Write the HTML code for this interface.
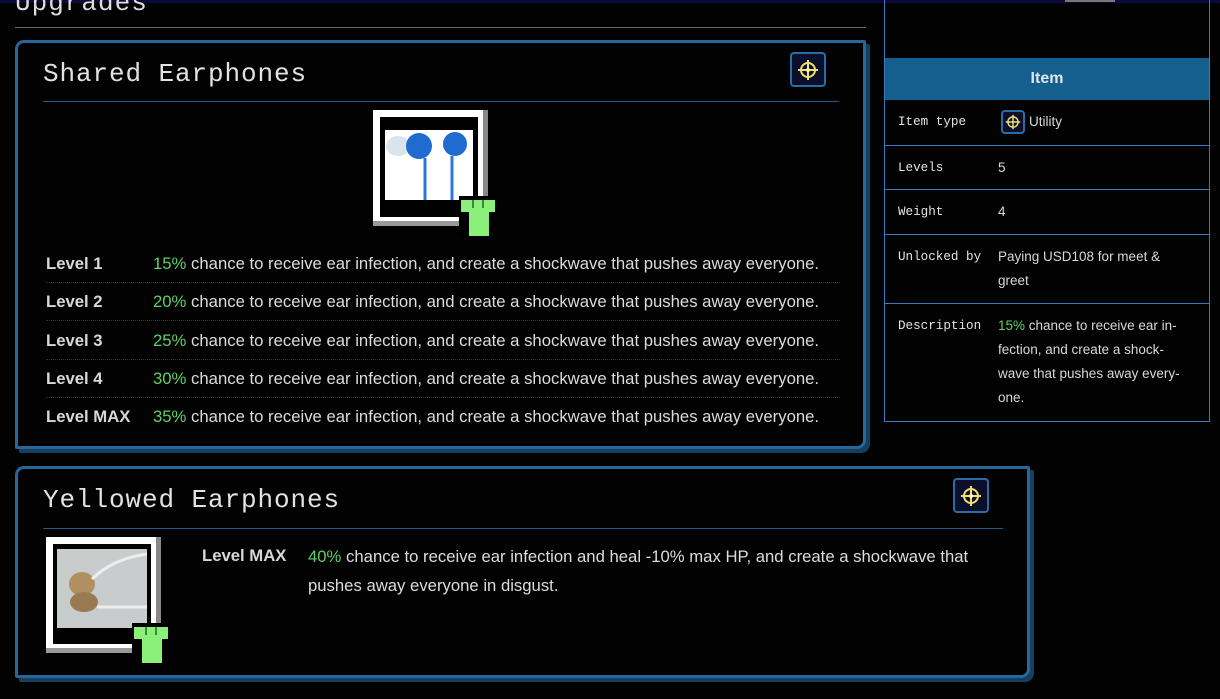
<!DOCTYPE html>
<html><head><meta charset="utf-8"><style>
*{margin:0;padding:0;box-sizing:border-box}
body{width:1220px;height:699px;background:#020202;position:relative;overflow:hidden;font-family:"Liberation Sans",sans-serif;color:#dcdcdc}
.topbar{position:absolute;left:0;top:0;width:1220px;height:3px;background:#0a0a3a}
.h2{position:absolute;left:15px;top:-12px;font-family:"Liberation Mono","DejaVu Sans Mono",monospace;font-size:26px;color:#ddd;letter-spacing:1px}
.hr{position:absolute;left:15px;top:27px;width:851px;height:1px;background:#666}
.box{position:absolute;border:3px solid #28679c;border-radius:9px 2px 9px 2px;box-shadow:4px 4px 0 #163e5e;background:#020202}
.title{position:absolute;font-family:"Liberation Mono","DejaVu Sans Mono",monospace;font-size:26px;color:#e2e2e2;letter-spacing:0.9px}
.line{position:absolute;height:1px;background:#1f5a88}
.ico{position:absolute;width:36px;height:35px;border:2px solid #2a6ca5;border-radius:4px;background:#0b0f2a}
.ico svg{position:absolute;left:5px;top:5px}
.row{position:absolute;left:28px;width:794px;height:38px;border-bottom:1px dotted #223344;font-size:16.7px}
.row b{position:absolute;left:0;top:9px;color:#d8d8d8}
.row span{position:absolute;left:107px;top:9px;white-space:nowrap}
.g{color:#5fd068}
.side{position:absolute;left:884px;top:0;width:326px;height:422px;border:1px solid #3a7ac0;border-top:none}
.shead{position:absolute;left:0;top:58px;width:324px;height:42px;background:#155f8e;color:#dfe6ee;font-weight:bold;font-size:16px;text-align:center;line-height:42px}
.srow{position:absolute;left:0;width:324px;border-top:1px solid #3a7ac0}
.sl{position:absolute;left:13px;font-family:"Liberation Mono","DejaVu Sans Mono",monospace;font-size:12.6px;color:#e4e4e4}
.sv{position:absolute;left:113px;width:178px;font-size:13.5px;line-height:24px;color:#d8d8d8}
</style></head><body>
<div class="topbar"></div>
<div class="h2">Upgrades</div>
<div class="hr"></div>

<div class="box" style="left:15px;top:40px;width:851px;height:409px">
 <div class="title" style="left:25px;top:16px">Shared Earphones</div>
 <div class="ico" style="left:772px;top:9px"><svg width="22" height="22" viewBox="0 0 22 22"><circle cx="11" cy="11" r="7" fill="none" stroke="#f0e070" stroke-width="2"/><path d="M11 1v20M1 11h20" stroke="#f0e070" stroke-width="2"/><circle cx="11" cy="11" r="2" fill="#fff2a0"/></svg></div>
 <div class="line" style="left:25px;top:58px;width:796px"></div>
 <div style="position:absolute;left:355px;top:67px;width:115px;height:116px;background:#fff"></div>
 <div style="position:absolute;left:465px;top:67px;width:5px;height:116px;background:#888"></div>
 <div style="position:absolute;left:355px;top:178px;width:115px;height:5px;background:#999"></div>
 <div style="position:absolute;left:362px;top:74px;width:98px;height:100px;background:#000"></div>
 <div style="position:absolute;left:367px;top:87px;width:88px;height:70px;background:#fff">
  <svg width="88" height="70"><ellipse cx="13" cy="16" rx="12" ry="10" fill="#d8e4ee"/><ellipse cx="34" cy="16" rx="13" ry="13" fill="#1f6bd0"/><ellipse cx="70" cy="14" rx="12" ry="12" fill="#1f6bd0"/><path d="M40 28v42M67 26v44" stroke="#2a78d0" stroke-width="3"/></svg>
 </div>
 <div style="position:absolute;left:441px;top:153px;width:37px;height:42px;background:#000"></div>
 <svg style="position:absolute;left:441px;top:155px" width="38" height="38" viewBox="0 0 38 38"><path d="M2 2h34v12h-6v24H10V14H2z" fill="#8af07a"/><path d="M14 2v8M24 2v8" stroke="#3a8a3a" stroke-width="2"/></svg>
 <div class="row" style="top:202px"><b>Level 1</b><span><i class="g" style="font-style:normal">15%</i> chance to receive ear infection, and create a shockwave that pushes away everyone.</span></div>
 <div class="row" style="top:240px"><b>Level 2</b><span><i class="g" style="font-style:normal">20%</i> chance to receive ear infection, and create a shockwave that pushes away everyone.</span></div>
 <div class="row" style="top:279px"><b>Level 3</b><span><i class="g" style="font-style:normal">25%</i> chance to receive ear infection, and create a shockwave that pushes away everyone.</span></div>
 <div class="row" style="top:317px"><b>Level 4</b><span><i class="g" style="font-style:normal">30%</i> chance to receive ear infection, and create a shockwave that pushes away everyone.</span></div>
 <div class="row" style="top:355px;border:none"><b>Level MAX</b><span><i class="g" style="font-style:normal">35%</i> chance to receive ear infection, and create a shockwave that pushes away everyone.</span></div>
</div>

<div class="box" style="left:15px;top:466px;width:1015px;height:212px">
 <div class="title" style="left:25px;top:16px">Yellowed Earphones</div>
 <div class="ico" style="left:935px;top:9px"><svg width="22" height="22" viewBox="0 0 22 22"><circle cx="11" cy="11" r="7" fill="none" stroke="#f0e070" stroke-width="2"/><path d="M11 1v20M1 11h20" stroke="#f0e070" stroke-width="2"/><circle cx="11" cy="11" r="2" fill="#fff2a0"/></svg></div>
 <div class="line" style="left:25px;top:59px;width:960px"></div>
 <div style="position:absolute;left:28px;top:68px;width:115px;height:116px;background:#fff"></div>
 <div style="position:absolute;left:138px;top:68px;width:5px;height:116px;background:#888"></div>
 <div style="position:absolute;left:28px;top:179px;width:115px;height:5px;background:#999"></div>
 <div style="position:absolute;left:35px;top:75px;width:98px;height:100px;background:#000"></div>
 <div style="position:absolute;left:39px;top:80px;width:90px;height:79px;background:#c8cccc">
  <svg width="90" height="79"><ellipse cx="25" cy="35" rx="13" ry="12" fill="#b09060"/><ellipse cx="27" cy="53" rx="14" ry="10" fill="#9a7a50"/><path d="M35 30q20-20 55-25M40 58h50" stroke="#eee" stroke-width="3" fill="none"/></svg>
 </div>
 <div style="position:absolute;left:114px;top:154px;width:37px;height:42px;background:#000"></div>
 <svg style="position:absolute;left:114px;top:156px" width="38" height="38" viewBox="0 0 38 38"><path d="M2 2h34v12h-6v24H10V14H2z" fill="#8af07a"/><path d="M14 2v8M24 2v8" stroke="#3a8a3a" stroke-width="2"/></svg>
 <div style="position:absolute;left:184px;top:77px;font-size:16.7px;font-weight:bold;color:#d8d8d8">Level MAX</div>
 <div style="position:absolute;left:290px;top:73px;width:680px;font-size:16.7px;line-height:29px"><span class="g">40%</span> chance to receive ear infection and heal -10% max HP, and create a shockwave that pushes away everyone in disgust.</div>
</div>

<div class="side">
 <div style="position:absolute;left:180px;top:0;width:50px;height:2px;background:#777"></div>
 <div class="shead">Item</div>
 <div class="srow" style="top:100px;height:45px;border-top:none"><div class="sl" style="top:15px">Item type</div>
  <div style="position:absolute;left:116px;top:10px;width:24px;height:24px;border:2px solid #2a6ca5;border-radius:4px;background:#0b0f2a"><svg style="position:absolute;left:2px;top:2px" width="16" height="16" viewBox="0 0 22 22"><circle cx="11" cy="11" r="7" fill="none" stroke="#f0e070" stroke-width="2"/><path d="M11 1v20M1 11h20" stroke="#f0e070" stroke-width="2"/></svg></div>
  <div class="sv" style="left:144px;top:10px">Utility</div></div>
 <div class="srow" style="top:145px;height:44px"><div class="sl" style="top:15px">Levels</div><div class="sv" style="top:10px">5</div></div>
 <div class="srow" style="top:189px;height:45px"><div class="sl" style="top:15px">Weight</div><div class="sv" style="top:10px">4</div></div>
 <div class="srow" style="top:234px;height:69px"><div class="sl" style="top:15px">Unlocked by</div><div class="sv" style="top:10px">Paying USD108 for meet &amp; greet</div></div>
 <div class="srow" style="top:303px;height:118px"><div class="sl" style="top:15px">Description</div><div class="sv" style="top:10px;width:195px"><span class="g">15%</span> chance to receive ear in-fection, and create a shock-wave that pushes away every-one.</div></div>
</div>
</body></html>
